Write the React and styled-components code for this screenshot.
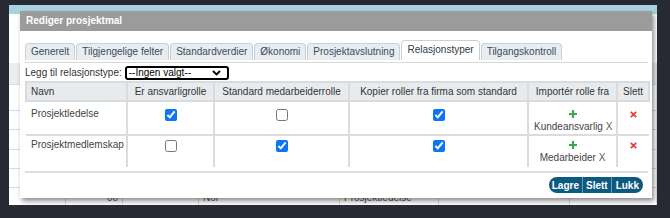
import styled, { createGlobalStyle } from 'styled-components';

const GlobalStyle = createGlobalStyle`
  html, body {
    margin: 0;
    padding: 0;
    background: #272a33;
    font-family: "Liberation Sans", Arial, sans-serif;
    font-size: 10px;
    color: #333;
  }
`;

const Page = styled.div`
  position: relative;
  margin: 5px 13px 0 9px;
  height: 200px;
  background: #fff;
  overflow: hidden;
`;

const TopStrip = styled.div`
  height: 9px;
  background: #a8d3de;
`;

const BackTable = styled.div`
  margin-top: 49px;
  display: grid;
  grid-template-columns: 57px 57px 76px 141px 99px 131px 87px;
`;

const BackCell = styled.div`
  height: ${(p) => p.$h}px;
  box-sizing: border-box;
  border-bottom: 1px solid #dcdcdc;
  border-right: 1px solid #dcdcdc;
  background: ${(p) => (p.$head ? '#ededed' : '#fff')};
  padding: 0 4px;
  line-height: ${(p) => p.$h}px;
  text-align: ${(p) => (p.$right ? 'right' : 'left')};
  color: #555;
`;

const Dialog = styled.div`
  position: absolute;
  left: 11px;
  top: 6px;
  width: 632px;
  height: 187px;
  background: #fff;
  box-shadow: 2px 3px 5px rgba(0, 0, 0, 0.45);
  display: flex;
  flex-direction: column;
`;

const DialogHeader = styled.div`
  height: 20px;
  background: #9b9b9b;
  color: #fff;
  font-weight: bold;
  font-size: 10px;
  line-height: 20px;
  padding-left: 6px;
`;

const DialogBody = styled.div`
  flex: 1;
  padding: 9px 4px 0 5px;
  display: flex;
  flex-direction: column;
`;

const Tabs = styled.div`
  display: flex;
  align-items: flex-end;
  height: 20px;
  gap: 1px;
`;

const Tab = styled.div`
  box-sizing: border-box;
  height: ${(p) => (p.$active ? 20 : 17)}px;
  line-height: ${(p) => (p.$active ? 18 : 16)}px;
  padding: 0 5px;
  border: 1px solid #c9d0d6;
  border-bottom: none;
  border-radius: 4px 4px 0 0;
  background: ${(p) => (p.$active ? '#fff' : '#e8edf1')};
  color: ${(p) => (p.$active ? '#2e3b48' : '#3d4b5a')};
  white-space: nowrap;
`;

const TabLine = styled.div`
  margin-top: 2px;
  height: 1px;
  background: #d8d8d8;
`;

const AddRow = styled.div`
  margin-top: 2px;
  height: 15px;
  display: flex;
  align-items: center;
  gap: 3px;
  color: #333;
`;

const FakeSelect = styled.div`
  box-sizing: border-box;
  width: 104px;
  height: 14px;
  border: 2px solid #000;
  border-radius: 3px;
  display: flex;
  align-items: center;
  justify-content: space-between;
  padding: 0 6px 0 2px;
  color: #000;
  line-height: 10px;
`;

const Table = styled.table`
  margin-top: 1px;
  width: 623px;
  border-collapse: collapse;
  table-layout: fixed;
`;

const Th = styled.th`
  height: 17px;
  padding: 0 4px;
  background: #e8ebee;
  border: 2px solid #d9dcdf;
  font-weight: normal;
  color: #333;
  text-align: ${(p) => (p.$left ? 'left' : 'center')};
  white-space: nowrap;
`;

const Tr = styled.tr`
  height: ${(p) => p.$h}px;
  border-bottom: ${(p) => (p.$last ? 'none' : '2px solid #dcdcdc')};

  td {
    padding-top: ${(p) => p.$pad}px;
  }
`;

const Td = styled.td`
  vertical-align: top;
  padding: 0 5px;
  line-height: 13px;
  border-left: ${(p) => (p.$first ? 'none' : '2px solid #dcdcdc')};
  text-align: ${(p) => (p.$left ? 'left' : 'center')};
  color: #444;
  white-space: nowrap;
`;

const Check = styled.input.attrs({ type: 'checkbox', readOnly: true })`
  width: 12px;
  height: 12px;
  margin: 2px 0 0;
  accent-color: #0b75f5;
`;

const Link = styled.span`
  color: #4c5c6c;
`;

const FooterLine = styled.div`
  margin-top: 4px;
  height: 2px;
  background: #dedede;
`;

const Footer = styled.div`
  display: flex;
  justify-content: flex-end;
  padding: 4px 5px 0 0;
`;

const ButtonGroup = styled.div`
  display: flex;
  height: 16px;
  border-radius: 8px;
  overflow: hidden;
  background: #0d5a80;
`;

const Button = styled.button`
  border: none;
  background: transparent;
  color: #fff;
  font-family: inherit;
  font-weight: bold;
  font-size: 10px;
  height: 16px;
  padding: 0 ${(p) => p.$pad}px;
  border-left: ${(p) => (p.$first ? 'none' : '1px solid #6b9ab2')};
`;

const Plus = () => (
  <svg width="8" height="8" viewBox="0 0 8 8" style={{ display: 'block', margin: '3px auto 2px' }}>
    <path d="M4 0v8M0 4h8" stroke="#3ba94a" strokeWidth="2.2" />
  </svg>
);

const Cross = () => (
  <svg width="7" height="7" viewBox="0 0 7 7" style={{ display: 'block', margin: '4px auto 0' }}>
    <path d="M0.8 0.8l5.4 5.4M6.2 0.8l-5.4 5.4" stroke="#e0433f" strokeWidth="1.8" />
  </svg>
);

const Chevron = () => (
  <svg width="9" height="6" viewBox="0 0 9 6">
    <path d="M1 1l3.5 3.5L8 1" fill="none" stroke="#000" strokeWidth="1.8" />
  </svg>
);

const tabs = [
  'Generelt',
  'Tilgjengelige felter',
  'Standardverdier',
  'Økonomi',
  'Prosjektavslutning',
  'Relasjonstyper',
  'Tilgangskontroll',
];

const backRows = [
  { h: 22, head: true },
  { h: 26 },
  { h: 19 },
  { h: 20 },
  { h: 19 },
  { h: 19 },
  { h: 19, cells: ['', '00', '', 'Nor', 'Prosjektledelse', '', ''] },
];

const rows = [
  { name: 'Prosjektledelse', a: true, b: false, c: true, imp: 'Kundeansvarlig', h: 34, pad: 5 },
  { name: 'Prosjektmedlemskap', a: false, b: true, c: true, imp: 'Medarbeider', h: 32, pad: 2, last: true },
];

export default function App() {
  return (
    <>
      <GlobalStyle />
      <Page>
        <TopStrip />
        <BackTable>
          {backRows.map((r, i) =>
            Array.from({ length: 7 }).map((_, j) => (
              <BackCell key={`${i}-${j}`} $h={r.h} $head={r.head} $right={j === 1}>
                {r.cells ? r.cells[j] : ''}
              </BackCell>
            ))
          )}
        </BackTable>

        <Dialog>
          <DialogHeader>Rediger prosjektmal</DialogHeader>
          <DialogBody>
            <Tabs>
              {tabs.map((t) => (
                <Tab key={t} $active={t === 'Relasjonstyper'}>
                  {t}
                </Tab>
              ))}
            </Tabs>
            <TabLine />
            <AddRow>
              <span>Legg til relasjonstype:</span>
              <FakeSelect>
                <span>--Ingen valgt--</span>
                <Chevron />
              </FakeSelect>
            </AddRow>
            <Table>
              <colgroup>
                <col style={{ width: 101 }} />
                <col style={{ width: 87 }} />
                <col style={{ width: 135 }} />
                <col style={{ width: 179 }} />
                <col style={{ width: 89 }} />
                <col style={{ width: 32 }} />
              </colgroup>
              <thead>
                <tr>
                  <Th $left>Navn</Th>
                  <Th>Er ansvarligrolle</Th>
                  <Th>Standard medarbeiderrolle</Th>
                  <Th>Kopier roller fra firma som standard</Th>
                  <Th>Importér rolle fra</Th>
                  <Th>Slett</Th>
                </tr>
              </thead>
              <tbody>
                {rows.map((r) => (
                  <Tr key={r.name} $h={r.h} $pad={r.pad} $last={r.last}>
                    <Td $first $left>
                      {r.name}
                    </Td>
                    <Td>
                      <Check defaultChecked={r.a} />
                    </Td>
                    <Td>
                      <Check defaultChecked={r.b} />
                    </Td>
                    <Td>
                      <Check defaultChecked={r.c} />
                    </Td>
                    <Td>
                      <Plus />
                      {r.imp} <Link>X</Link>
                    </Td>
                    <Td>
                      <Cross />
                    </Td>
                  </Tr>
                ))}
              </tbody>
            </Table>
            <FooterLine />
            <Footer>
              <ButtonGroup>
                <Button $first $pad={3}>Lagre</Button>
                <Button $pad={3}>Slett</Button>
                <Button $pad={4}>Lukk</Button>
              </ButtonGroup>
            </Footer>
          </DialogBody>
        </Dialog>
      </Page>
    </>
  );
}
